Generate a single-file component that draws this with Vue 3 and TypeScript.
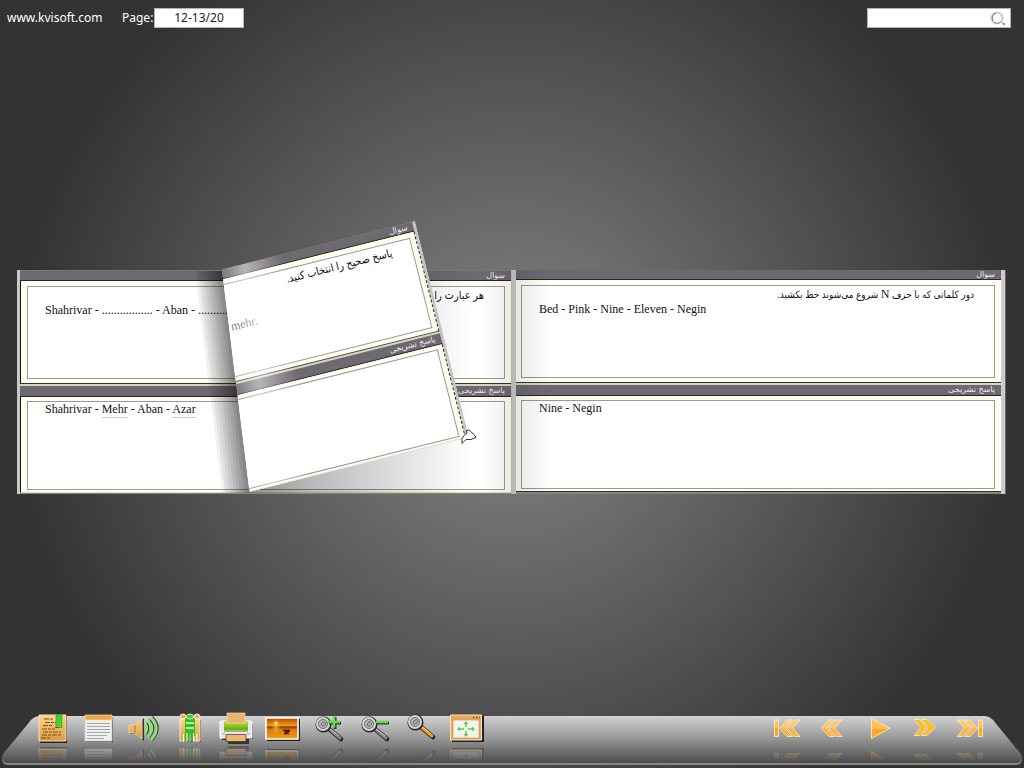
<script setup lang="ts">
import { ref } from 'vue'

interface Part {
  text: string
  marked?: boolean
}
interface Card {
  title: string
  prompt?: string[]
  parts: Part[]
}
interface Sheet {
  id: string
  cards: Card[]
}

const question = 'سوال'
const answer = 'پاسخ تشریحی'

const sheets: Sheet[] = [
  {
    id: 'left',
    cards: [
      {
        title: question,
        prompt: ['هر عبارت را کامل کنید.'],
        parts: [{ text: 'Shahrivar - ................. - Aban - .................' }],
      },
      {
        title: answer,
        parts: [
          { text: 'Shahrivar - ' },
          { text: 'Mehr', marked: true },
          { text: ' - Aban - ' },
          { text: 'Azar', marked: true },
        ],
      },
    ],
  },
  {
    id: 'right',
    cards: [
      {
        title: question,
        prompt: ['دور کلماتی که با حرف ', 'N', ' شروع می‌شوند خط بکشید.'],
        parts: [{ text: 'Bed - Pink - Nine - Eleven - Negin' }],
      },
      { title: answer, parts: [{ text: 'Nine - Negin' }] },
    ],
  },
  {
    id: 'flap',
    cards: [
      { title: question, prompt: ['پاسخ صحیح را انتخاب کنید.'], parts: [{ text: 'mehr.' }] },
      { title: answer, parts: [] },
    ],
  },
]

const tools = ['Bookmarks', 'Contents', 'Sound', 'Share', 'Print', 'Background', 'Zoom in', 'Zoom out', 'Actual size', 'Full screen']
const moves = ['First page', 'Previous page', 'Auto flip', 'Next page', 'Last page']

const page = ref('12-13/20')
const search = ref('')
</script>

<template>
  <div class="viewer">
    <header class="top">
      <a class="site" href="#">www.kvisoft.com</a>
      <label class="page-label" for="page">Page:</label>
      <input id="page" v-model="page" class="field page-field" type="text" />
      <div class="search">
        <input v-model="search" class="field search-field" type="text" aria-label="Search" />
        <button class="search-go" type="button" aria-label="Find">
          <svg width="18" height="16" viewBox="0 0 18 16">
            <circle cx="8" cy="7" r="5.5" fill="none" stroke="#c9c9c9" stroke-width="2" />
            <path d="M4 10A5.5 5.5 0 0 1 7 2" fill="none" stroke="#777" stroke-width="1" />
            <path d="M5 11.5q3 2 6 0M12 11l2 1.500" fill="none" stroke="#999" />
            <circle cx="15" cy="13" r="1.300" fill="#999" />
          </svg>
        </button>
      </div>
    </header>

    <main class="stage">
      <div class="book">
        <article v-for="sheet in sheets" :key="sheet.id" class="sheet" :class="sheet.id">
          <section v-for="(card, i) in sheet.cards" :key="i" class="card">
            <h2 class="bar" dir="rtl">{{ card.title }}</h2>
            <div class="body">
              <div class="frame">
                <p v-if="card.prompt" class="prompt" dir="rtl">
                  <span v-for="(piece, n) in card.prompt" :key="n" :class="{ latin: n === 1 }">{{ piece }}</span>
                </p>
                <p class="line">
                  <span v-for="(part, n) in card.parts" :key="n" :class="{ marked: part.marked }">{{ part.text }}</span>
                </p>
              </div>
            </div>
          </section>
          <div class="shade"></div>
          <div v-if="sheet.id === 'left'" class="fold"></div>
        </article>
        <div class="spine"></div>
        <svg class="grip" width="18" height="16" viewBox="0 0 18 16">
          <path d="M2 14.500Q1 9 4 6.500L7 4l-.5-2.500L9 1l5 4.500 2 3-3 1-2 1H6l-2 2z" fill="#fff" stroke="#333" stroke-width="1" />
        </svg>
      </div>
    </main>

    <footer class="dock">
      <div class="lip"></div>
      <div class="deck"></div>
      <div class="group">
        <button v-for="tool in tools" :key="tool" class="tool" type="button" :aria-label="tool">
          <svg class="icon" width="34" height="30" viewBox="0 0 34 30">
            <defs>
              <linearGradient id="tan" x1="0" y1="0" x2="0" y2="1"><stop offset="0" stop-color="#ffd58c" /><stop offset="1" stop-color="#d99a43" /></linearGradient>
              <linearGradient id="lime" x1="0" y1="0" x2="0" y2="1"><stop offset="0" stop-color="#b6e83c" /><stop offset="1" stop-color="#66a80c" /></linearGradient>
              <linearGradient id="sun" x1="0" y1="0" x2="0" y2="1"><stop offset="0" stop-color="#a84406" /><stop offset=".3" stop-color="#f08a0a" /><stop offset=".38" stop-color="#f79a12" /><stop offset=".42" stop-color="#7a3503" /><stop offset=".55" stop-color="#d97c08" /><stop offset="1" stop-color="#f0a012" /></linearGradient>
              <radialGradient id="glow"><stop offset="0" stop-color="#ffe45c" /><stop offset="1" stop-color="#ffb020" stop-opacity="0" /></radialGradient>
            </defs>
            <g v-if="tool === 'Bookmarks'">
              <path d="M5 2h27v27H5z" fill="#222" />
              <path d="M4 1h27v26H4z" fill="url(#tan)" stroke="#f3e2c4" />
              <path d="M9 5h10M10 8.500h17M8 11.500h10M20 13.500h7M7 15h13M8 18h18M7 21h20M6 24h10" stroke="#76501f" stroke-width="1.200" stroke-dasharray="5 1 3 1" />
              <path d="M21 1h6v13l-3-3-3 3z" fill="#45d32c" stroke="#2a9c18" stroke-width=".6" />
            </g>
            <g v-else-if="tool === 'Contents'">
              <path d="M5 3h27v25H5z" fill="#333" />
              <path d="M4 2h27v25H4z" fill="#f0f0f0" stroke="#d0d0d0" />
              <path d="M4 1h27v5H4z" fill="#eba646" stroke="#ffe1ab" stroke-width=".7" />
              <path d="M6 9.500h23M6 12.500h23M6 15.500h23M6 18.500h23M6 21.500h20M6 24.500h17" stroke="#a5a5a5" />
            </g>
            <g v-else-if="tool === 'Sound'">
              <path d="M3 12h6l8-8v23l-8-7H3z" fill="#333" />
              <path d="M2 11h6l7-8v22l-7-6H2z" fill="url(#tan)" stroke="#e9d2aa" />
              <path d="M8 11v8" stroke="#b87828" />
              <path d="M19 9q4 5 0 11M22 6q8 8 0 17M25 3q11 11 0 23" fill="none" stroke="#333" stroke-width="2.500" />
              <path d="M18 9q4 5 0 11M21 6q8 8 0 17M24 3q11 11 0 23" fill="none" stroke="#8be376" stroke-width="2.400" />
            </g>
            <g v-else-if="tool === 'Share'">
              <path d="M8 6h20v22H8z" fill="#2b2b2b" opacity=".8" />
              <path d="M7 5h6v22H7zM21 5h6v22h-6z" fill="url(#tan)" stroke="#f8e8ce" />
              <path d="M12 4h10v18h-2v5h-2v-7h-2v7h-4z" fill="#35bd21" />
              <path d="M13 9h8M13 14h8" stroke="#b8f2a8" stroke-width="2" />
              <ellipse cx="10" cy="2.500" rx="3" ry="2.500" fill="#eab067" stroke="#fff0d8" />
              <ellipse cx="24" cy="2.500" rx="3" ry="2.500" fill="#eab067" stroke="#fff0d8" />
              <ellipse cx="17" cy="2.500" rx="3.500" ry="2.500" fill="#45cd2d" stroke="#dcf7d5" />
              <path d="M10.500 20v8M14 19v9M17 20v8M20.500 19v9M24 20v8" stroke="#fff" stroke-width="1" />
            </g>
            <g v-else-if="tool === 'Print'">
              <path d="M3 10h31v15h-4v5H9v-4H3z" fill="#333" />
              <path d="M1 8q0-1 2-1h28q2 0 2 1v16H1z" fill="#e8e8e8" stroke="#fff" />
              <path d="M5 7h24v9H5z" fill="url(#lime)" />
              <path d="M5 17h24" stroke="#557f1d" />
              <path d="M8-1h18v10H8z" fill="#e8b46d" stroke="#f7d8a8" stroke-width=".7" />
              <path d="M7 20.500h20v7H7z" fill="#edb76d" stroke="#333" stroke-width=".7" />
              <path d="M3 20h3M28 20h3" stroke="#aaa" />
            </g>
            <g v-else-if="tool === 'Background'">
              <path d="M2 5h33v22H2z" fill="#222" />
              <path d="M1 4h32v21H1z" fill="url(#sun)" stroke="#fff" stroke-width="1.600" />
              <ellipse cx="11" cy="12" rx="5" ry="9" fill="url(#glow)" opacity=".7" />
              <circle cx="11" cy="9" r="1.300" fill="#fff3a0" />
              <path d="M18 16.500h7M20 18l5-1M19 19.500h5" stroke="#351501" stroke-width="1.300" />
            </g>
            <g v-else-if="tool === 'Full screen'">
              <path d="M3 2h32v26H3z" fill="#222" />
              <path d="M1.500 1h31v25h-31z" fill="#e7a857" stroke="#fae5c5" />
              <path d="M4 6h26v18H4z" fill="#f2f2f2" stroke="#c98d3e" stroke-width=".6" />
              <path d="M24 3.500h1.500M27 3.500h1.500M30 3.500h1" stroke="#805015" stroke-width="1.500" />
              <path d="M17 8v5M17 17v5M9 15h6M19 15h6" stroke="#60cc45" stroke-width="1.500" />
              <path d="M14.500 10L17 7l2.500 3zM14.500 20l2.500 3 2.500-3zM11 12.500L8 15l3 2.500zM23 12.500l3 2.500-3 2.500z" fill="#60cc45" />
            </g>
            <g v-else :transform="tool === 'Actual size' ? 'translate(0 -2)' : ''">
              <path d="M18 15l12 10" stroke="#222" stroke-width="4.500" stroke-linecap="round" />
              <path d="M17 14l12 10" :stroke="tool === 'Actual size' ? '#ee981d' : '#888'" stroke-width="3" stroke-linecap="round" />
              <path d="M18 14l10 8" :stroke="tool === 'Actual size' ? '#ffd28a' : '#ccc'" stroke-width="1" />
              <circle cx="12.500" cy="10.500" r="7" fill="none" stroke="#222" stroke-width="2" />
              <circle cx="12" cy="10" r="6" fill="#a9a9a9" stroke="#d5d5d5" stroke-width="2" />
              <circle cx="12" cy="10" r="4.500" fill="#b4b4b4" stroke="#777" stroke-width="1" />
              <path d="M10 12q0-4 4-4.500M11 12.500q3.500-.5 4-4" stroke="#666" fill="none" />
              <template v-if="tool !== 'Actual size'">
                <path :d="tool === 'Zoom in' ? 'M18 9h12M24 3v12' : 'M20 9h12'" stroke="#333" stroke-width="3" />
                <path :d="tool === 'Zoom in' ? 'M17 8h12M23 2.500v11' : 'M19 8h12'" stroke="#5fdb43" stroke-width="2.500" />
              </template>
            </g>
          </svg>
        </button>
      </div>
      <nav class="group" aria-label="Pages">
        <button v-for="move in moves" :key="move" class="tool" type="button" :aria-label="move">
          <svg class="icon" width="34" height="30" viewBox="0 0 34 30">
            <defs>
              <linearGradient id="amber" x1="0" y1="0" x2="0" y2="1"><stop offset="0" stop-color="#ffc55c" /><stop offset=".5" stop-color="#ffc04e" /><stop offset=".52" stop-color="#ffa51c" /><stop offset="1" stop-color="#ffac28" /></linearGradient>
            </defs>
            <g fill="url(#amber)" stroke="#fff0d5" stroke-width=".8">
              <path v-if="move === 'Auto flip'" d="M10.500 4.500L29 14 10.500 24.500z" />
              <template v-else-if="move === 'Next page'">
                <path d="M7 5.500h5.500l7 8-7 8H7l7-8z" fill="#ffb200" />
                <path d="M14.500 5.500H20l8 8-8 8h-5.500l7-8z" fill="#ffb200" />
                <path d="M10 6l7 7.500-7 7.500M18 6l7 7.500-7 7.500" fill="none" stroke-width=".5" />
              </template>
              <g v-else :transform="move === 'Last page' ? 'matrix(-1 0 0 1 35 0)' : move === 'Previous page' ? 'translate(-4 0)' : ''">
                <path v-if="move !== 'Previous page'" d="M5.500 6h4v16.500h-4z" />
                <path d="M18 6h5.500l-7.500 8 7.500 8.500H18L10.500 14z" />
                <path d="M25.500 6H31l-7.500 8 7.500 8.500h-5.500L18 14z" />
                <path d="M21 6.500L13.500 14l7.500 8M28.500 6.500L21 14l7.500 8" fill="none" stroke-width=".5" />
              </g>
            </g>
          </svg>
        </button>
      </nav>
    </footer>
  </div>
</template>

<style>
body {
  margin: 0;
  background: #333;
}
</style>

<style scoped>
.viewer {
  box-sizing: border-box;
  min-height: 100vh;
  display: flex;
  flex-direction: column;
  overflow: hidden;
  background: radial-gradient(circle at 50% 50%, #868686 0, #333 500px);
  font-family: 'Noto Sans', 'DejaVu Sans', sans-serif;
}
.top {
  height: 42px;
  padding: 8px 13px 0 7px;
  display: flex;
  align-items: flex-start;
  font-size: 12px;
  line-height: 20px;
  color: #fff;
}
.site {
  min-width: 97px;
  color: #fff;
  text-decoration: none;
  margin-right: 18px;
}
.page-label {
  min-width: 32px;
}
.field {
  box-sizing: border-box;
  height: 20px;
  padding: 0 4px;
  border: 1px solid #b0b4bd;
  background: #fff;
  font: inherit;
  color: #222;
}
.page-field {
  width: 90px;
  text-align: center;
}
.search {
  position: relative;
  margin-left: auto;
  display: flex;
}
.search-field {
  width: 144px;
  padding-right: 24px;
}
.search-go {
  position: absolute;
  right: 4px;
  top: 3px;
  padding: 0;
  border: 0;
  background: none;
  line-height: 0;
}
.stage {
  flex: 1;
  display: flex;
  flex-direction: column;
  justify-content: center;
  padding: 0 18px 0 17px;
}
.book {
  position: relative;
  display: grid;
  grid-template-columns: 491fr 5px 485fr;
  padding: 0 5px 0 3px;
  background: linear-gradient(90deg, #c8c8c8 0 3px, transparent 3px calc(100% - 5px), #ccc calc(100% - 5px) calc(100% - 1px), #666 calc(100% - 1px));
}
.sheet {
  position: relative;
  grid-row: 1;
  border-bottom: 2px solid #85857f;
  background: #d8d3bd;
  min-width: 0;
}
.left {
  grid-column: 1;
  border-top: 1px solid #77737a;
  border-bottom-width: 1px;
  overflow: hidden;
}
.right {
  grid-column: 3;
}
.spine {
  grid-column: 2;
  grid-row: 1;
  background: linear-gradient(90deg, #aaa, #bcbcbc 40%, #b4b4b4);
}
.card + .card {
  margin-top: 2px;
}
.bar {
  box-sizing: border-box;
  height: 10px;
  margin: 0;
  padding: 0 6px;
  border-bottom: 1px solid #29232c;
  background: #6e6870;
  color: #eee;
  font-family: 'DejaVu Sans', sans-serif;
  font-size: 8px;
  line-height: 9px;
  font-weight: normal;
}
.card + .card .bar {
  height: 11px;
}
.body {
  padding: 5px 6px 4px 5px;
  border-bottom: 1px solid #333;
  background: #fffff0;
}
.left .body {
  padding-left: 6px;
  border-left: 1px solid #111;
}
.card + .card .body {
  padding-top: 4px;
  padding-bottom: 2px;
}
.left .card + .card .body,
.flap .card + .card .body {
  border-bottom-color: #ddddcb;
}
.frame {
  box-sizing: border-box;
  min-height: 93px;
  padding: 1px 20px 0 17px;
  border: 1px solid #999;
  background: #fff;
}
.card + .card .frame {
  min-height: 89px;
  padding-top: 0;
}
.prompt,
.line {
  margin: 0;
  color: #111;
  white-space: nowrap;
  font-family: 'Liberation Serif', 'DejaVu Sans Condensed', 'DejaVu Sans', serif;
  font-size: 12px;
  line-height: 15px;
}
.prompt {
  height: 15px;
  font-size: 11px;
}
.right .prompt {
  font-size: 10px;
  white-space: pre-wrap;
}
.prompt .latin {
  font-size: 12px;
}
.line {
  white-space: pre;
}
.marked {
  text-decoration: underline #ccc;
  text-underline-offset: 4px;
}
.shade {
  position: absolute;
  inset: 0;
  pointer-events: none;
}
.left .shade {
  background: linear-gradient(90deg, transparent 230px, rgba(0, 0, 0, 0.42) 230px, rgba(0, 0, 0, 0.28) 290px, transparent 450px, transparent 462px, rgba(0, 0, 0, 0.07));
}
.right .shade {
  background: linear-gradient(90deg, rgba(0, 0, 0, 0.09), transparent 34px);
}
.fold {
  position: absolute;
  top: 0;
  bottom: 0;
  left: 175px;
  width: 28px;
  transform: skewX(7deg);
  transform-origin: top;
  background: linear-gradient(90deg, rgba(0, 0, 0, 0.06) 3px, rgba(0, 0, 0, 0.12) 3px 6px, rgba(0, 0, 0, 0.17) 6px 9px, rgba(0, 0, 0, 0.22) 9px 12px, rgba(0, 0, 0, 0.27) 12px 15px, rgba(0, 0, 0, 0.32) 15px 18px, rgba(0, 0, 0, 0.37) 18px 21px, rgba(0, 0, 0, 0.42) 21px 24px, rgba(0, 0, 0, 0.47) 24px);
}
/* The sheet being turned lies over the left page. */
.flap {
  position: absolute;
  top: -49px;
  left: 172px;
  width: 226px;
  box-sizing: border-box;
  border-right: 3px solid #c4c4c4;
  border-bottom: 0;
  transform: rotate(-14deg);
  transform-origin: top right;
  clip-path: polygon(27px 0, 100% 0, 100% 100%, 0 100%);
}
.flap .body {
  border-right: 1px dashed #222;
  padding-left: 0;
  padding-right: 5px;
}
.flap .frame {
  border-left: 0;
  padding-top: 2px;
}
.flap .card + .card .frame {
  min-height: 90px;
}
.flap .line {
  padding-left: 5px;
  margin-top: 18px;
  color: #555;
}
.flap .shade {
  background: linear-gradient(97deg, transparent 15px, rgba(255, 255, 255, 0.15) 28px, rgba(255, 255, 255, 0.5) 50px, transparent 90px);
}
.grip {
  position: absolute;
  left: 443px;
  top: 159px;
}
.dock {
  position: relative;
  height: 54px;
  display: flex;
  justify-content: space-between;
  padding: 0 31px 0 29px;
}
.lip,
.deck {
  position: absolute;
  left: 2px;
  right: 2px;
  top: 2px;
  clip-path: polygon(0 calc(100% - 5px), 1px calc(100% - 9px), 25px 9px, 29px 4px, 33px 1px, 38px 0, calc(100% - 38px) 0, calc(100% - 33px) 1px, calc(100% - 29px) 4px, calc(100% - 25px) 9px, calc(100% - 1px) calc(100% - 9px), 100% calc(100% - 5px), calc(100% - 2px) calc(100% - 1px), calc(100% - 5px) 100%, 5px 100%, 2px calc(100% - 1px));
}
.lip {
  bottom: 3px;
  background: #868686;
}
.deck {
  bottom: 5px;
  background: linear-gradient(#d2d2d2, #9a9a9a 45%, #4c4c4c);
}
.group {
  position: relative;
  display: flex;
}
.tool {
  width: 46px;
  height: 30px;
  padding: 0;
  border: 0;
  background: none;
  display: flex;
  justify-content: center;
  cursor: pointer;
  -webkit-box-reflect: below 2px linear-gradient(transparent 50%, rgba(0, 0, 0, 0.45));
}
.icon {
  flex: none;
  overflow: visible;
}
</style>
